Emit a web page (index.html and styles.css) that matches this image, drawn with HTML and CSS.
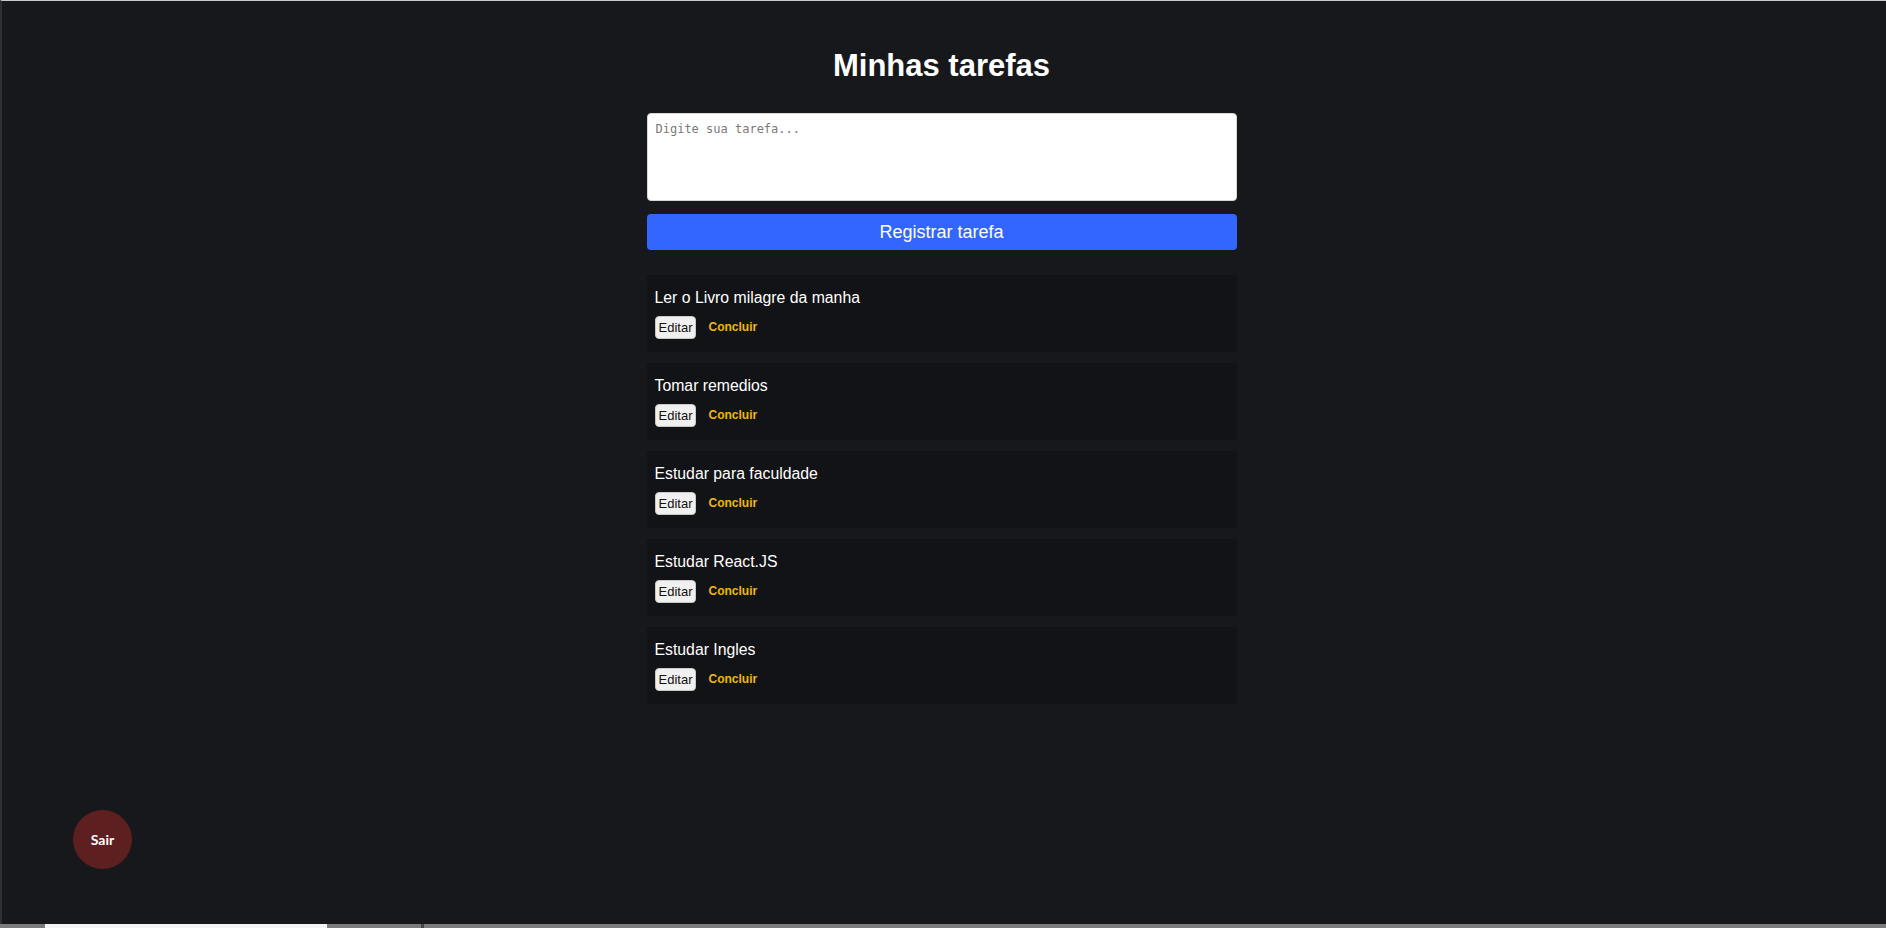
FILE: index.html
```html
<!DOCTYPE html>
<html lang="pt-BR">
<head>
<meta charset="utf-8">
<title>Minhas tarefas</title>
<link rel="stylesheet" href="styles.css">
</head>
<body>
  <main class="container">
    <h1 class="title">Minhas tarefas</h1>
    <form class="form">
      <textarea class="input" placeholder="Digite sua tarefa..."></textarea>
      <button type="button" class="submit">Registrar tarefa</button>
    </form>
    <section class="tasks">
      <article class="task">
        <p class="task-text">Ler o Livro milagre da manha</p>
        <div class="actions"><button class="edit">Editar</button><button class="done">Concluir</button></div>
      </article>
      <article class="task">
        <p class="task-text">Tomar remedios</p>
        <div class="actions"><button class="edit">Editar</button><button class="done">Concluir</button></div>
      </article>
      <article class="task">
        <p class="task-text">Estudar para faculdade</p>
        <div class="actions"><button class="edit">Editar</button><button class="done">Concluir</button></div>
      </article>
      <article class="task">
        <p class="task-text">Estudar React.JS</p>
        <div class="actions"><button class="edit">Editar</button><button class="done">Concluir</button></div>
      </article>
      <article class="task">
        <p class="task-text">Estudar Ingles</p>
        <div class="actions"><button class="edit">Editar</button><button class="done">Concluir</button></div>
      </article>
    </section>
  </main>
  <button class="logout">Sair</button>
  <div class="hscroll">
    <span class="seg seg-a"></span>
    <span class="seg seg-thumb"></span>
    <span class="seg seg-b"></span>
    <span class="seg seg-mark"></span>
    <span class="seg seg-rest"></span>
  </div>
</body>
</html>
```
FILE: styles.css
```css
* { box-sizing: border-box; }

html, body { height: 100%; }

body {
  margin: 0;
  background: #17181c;
  border-top: 1px solid #c9c9c9;
  border-left: 2px solid #2e2f33;
  padding-right: 5px;
  font-family: "Liberation Sans", Arial, sans-serif;
  color: #ffffff;
  overflow: hidden;
}

.container {
  width: 590px;
  margin: 0 auto;
  padding-top: 47px;
}

.title {
  margin: 0 0 29px;
  font-size: 31px;
  line-height: 36px;
  font-weight: 700;
  text-align: center;
  color: #ffffff;
}

.form {
  display: flex;
  flex-direction: column;
  gap: 12px;
}

.input {
  display: block;
  width: 100%;
  height: 88px;
  resize: none;
  border: 1px solid #d6d6d6;
  border-radius: 4px;
  padding: 8px;
  font-family: "DejaVu Sans Mono", "Liberation Mono", monospace;
  font-size: 12px;
  line-height: 15px;
  background: #ffffff;
  color: #222;
}

.input::placeholder { color: #7a7a7a; }

.submit {
  height: 36px;
  margin-top: 1px;
  border: none;
  border-radius: 4px;
  background: #3366ff;
  color: #ffffff;
  font-family: "Liberation Sans", Arial, sans-serif;
  font-size: 18px;
}

.tasks {
  margin-top: 25px;
  display: flex;
  flex-direction: column;
  gap: 11px;
}

.task {
  background: #121316;
  border-radius: 4px;
  padding: 14px 8px 13px;
}

.task-text {
  margin: 0;
  font-size: 15.8px;
  line-height: 18px;
  color: #ffffff;
}

.actions {
  margin-top: 9px;
  display: flex;
  align-items: center;
  gap: 12px;
}

.edit {
  font-family: "Liberation Sans", Arial, sans-serif;
  font-size: 13px;
  line-height: 15px;
  padding: 3px 3px;
  border: 1px solid #c8c8c8;
  border-radius: 4px;
  background: #f0f0f0;
  color: #111;
}

.done {
  font-family: "Liberation Sans", Arial, sans-serif;
  font-size: 12px;
  line-height: 15px;
  font-weight: 700;
  padding: 0;
  border: none;
  background: transparent;
  color: #f2b705;
}

.logout {
  position: fixed;
  left: 73px;
  bottom: 59px;
  width: 59px;
  height: 59px;
  border: none;
  border-radius: 50%;
  background: #5e1f21;
  color: #ffffff;
  font-family: Lato, "Open Sans", sans-serif;
  font-weight: 700;
  font-size: 14px;
}

.hscroll {
  position: fixed;
  left: 0;
  right: 0;
  bottom: 0;
  height: 4px;
  display: flex;
}

.seg { display: block; height: 100%; }
.seg-a { width: 45px; background: #7b7b7b; }
.seg-thumb { width: 282px; background: #f4f4f4; }
.seg-b { width: 94px; background: #7b7b7b; }
.seg-mark { width: 3px; background: #444; }
.seg-rest { flex: 1; background: #7b7b7b; }
```
